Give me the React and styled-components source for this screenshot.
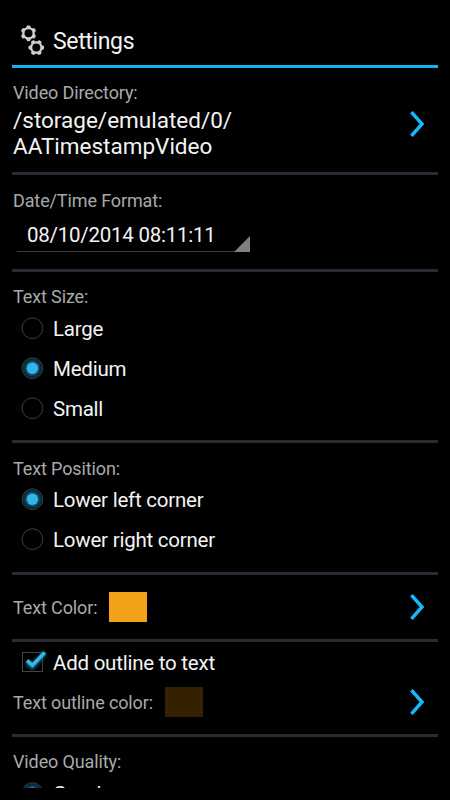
import React from "react";
import styled, { createGlobalStyle } from "styled-components";

const GlobalStyle = createGlobalStyle`
  * { box-sizing: border-box; }
  html, body { margin: 0; background: #000; }
  body { font-family: Roboto, "Liberation Sans", sans-serif; overflow: hidden; }
`;

const Screen = styled.main`
  width: 450px;
  height: 788px;
  padding: 0 12px;
  overflow: hidden;
  background: #000;
  color: #f3f3f3;
`;

const Header = styled.header`
  display: flex;
  align-items: center;
  height: 68px;
  padding: 14px 0 0 8px;
  border-bottom: 3px solid #14b4f0;
`;

const Title = styled.h1`
  margin: 0 0 0 7px;
  padding-top: 5px;
  font-size: 23px;
  font-weight: 400;
  line-height: 28px;
  letter-spacing: -0.35px;
`;

const Section = styled.section`
  height: ${(p) => p.$height + 3}px;
  border-bottom: 3px solid #2b2a35;
  padding-top: ${(p) => (p.$flush ? 0 : 14)}px;
`;

const Label = styled.div`
  height: 22px;
  padding-top: ${(p) => p.$drop || 0}px;
  padding-left: 1px;
  color: #a9a9a9;
  font-size: 18px;
  line-height: 22px;
  letter-spacing: -0.12px;
  white-space: nowrap;
`;

const LinkRow = styled.div`
  display: flex;
  align-items: center;
  justify-content: space-between;
  height: ${(p) => p.$height}px;
  padding-right: 13px;

  ${Label} {
    line-height: 20px;
    padding-top: 2px;
  }
`;

const DirectoryRow = styled.div`
  display: flex;
  justify-content: space-between;
  padding: 3px 13px 0 1px;
`;

const Path = styled.div`
  font-size: 22.5px;
  line-height: 26px;
`;

const Spinner = styled.div`
  display: flex;
  align-items: flex-end;
  justify-content: space-between;
  width: 233px;
  height: 41px;
  margin: 0 0 0 5px;
  padding-left: 10px;
  border-bottom: 1px solid #3c3c3c;
`;

const SpinnerText = styled.span`
  font-size: 20.5px;
  line-height: 32px;
  letter-spacing: -0.25px;
`;

const SpinnerCorner = styled.svg`
  display: block;
  margin-bottom: -1px;
`;

const Option = styled.div`
  display: flex;
  align-items: center;
  height: 40px;
  padding-left: 9px;
  gap: 8px;
`;

const OptionText = styled.span`
  padding-top: 1px;
  font-size: 20.5px;
  line-height: 26px;
  letter-spacing: -0.23px;
  white-space: nowrap;
`;

const ColorField = styled.div`
  display: flex;
  align-items: center;
  gap: 12px;
`;

const Swatch = styled.div`
  width: 38px;
  height: 30px;
  background: ${(p) => p.$color};
`;

const ChevronSvg = styled.svg`
  display: block;
  flex: none;
  margin-top: ${(p) => p.$top || 0}px;
`;

const Chevron = ({ top }) => (
  <ChevronSvg $top={top} width="16" height="28" viewBox="0 0 16 28">
    <path d="M2.4 2.2 L13 14 L2.4 25.8" fill="none" stroke="#14b9fa" strokeWidth="3.5" />
  </ChevronSvg>
);

const gearPath = (cx, cy, turn) => {
  const steps = 96;
  const pts = [];
  for (let i = 0; i < steps; i++) {
    const a = (i / steps) * Math.PI * 2;
    const tooth = Math.max(-1, Math.min(1, Math.cos(a * 6) * 1.7 + 0.2));
    const r = 7.05 + tooth * 0.8;
    const t = a - Math.PI / 2 + turn;
    pts.push(`${(cx + r * Math.cos(t)).toFixed(2)} ${(cy + r * Math.sin(t)).toFixed(2)}`);
  }
  return `M${pts.join("L")}Z M${cx - 4} ${cy}a4 4 0 1 0 8 0a4 4 0 1 0 -8 0Z`;
};

const Gears = () => (
  <svg width="26" height="32" viewBox="0 0 26 32">
    <g fill="#cecece" fillRule="evenodd">
      <path d={gearPath(8.5, 9.3, 0)} />
      <path d={gearPath(16.3, 23.6, Math.PI / 6)} />
    </g>
  </svg>
);

const Radio = ({ checked }) => (
  <svg width="24" height="24" viewBox="0 0 24 24">
    <defs>
      <radialGradient id="glow">
        <stop offset="0.5" stopColor="#11628a" />
        <stop offset="0.75" stopColor="#0b3549" />
        <stop offset="1" stopColor="#07151d" />
      </radialGradient>
    </defs>
    <circle cx="11.4" cy="12.2" r="10.4" fill={checked ? "url(#glow)" : "#000"} stroke="#3f3f3f" strokeWidth="1" />
    {checked && <circle cx="11.4" cy="12.2" r="5.7" fill="#33b5e5" />}
  </svg>
);

const Checkbox = () => (
  <svg width="24" height="24" viewBox="0 0 24 24" overflow="visible">
    <defs>
      <filter id="halo" x="-50%" y="-50%" width="200%" height="200%">
        <feGaussianBlur stdDeviation="1.6" />
      </filter>
    </defs>
    <rect x="1.5" y="1.5" width="20" height="19" fill="none" stroke="#454545" />
    <path d="M6 11 L11.3 15.7 L23.8 2" fill="none" stroke="#0b5b7c" strokeWidth="5.5" filter="url(#halo)" />
    <path d="M6 9.5 L11.4 14.2 L23.8 1.5" fill="none" stroke="#33b5e5" strokeWidth="3.7" />
  </svg>
);

const CheckOption = styled(Option)`
  height: 42px;

  ${OptionText} {
    padding-top: 0;
  }
`;

const RadioOption = ({ text, checked }) => (
  <Option>
    <Radio checked={checked} />
    <OptionText>{text}</OptionText>
  </Option>
);

export default function App() {
  return (
    <>
      <GlobalStyle />
      <Screen>
        <Header>
          <Gears />
          <Title>Settings</Title>
        </Header>

        <Section $height={104}>
          <Label>Video Directory:</Label>
          <DirectoryRow>
            <Path>/storage/emulated/0/<br />AATimestampVideo</Path>
            <Chevron top={3} />
          </DirectoryRow>
        </Section>

        <Section $height={94}>
          <Label $drop={1}>Date/Time Format:</Label>
          <Spinner>
            <SpinnerText>08/10/2014 08:11:11</SpinnerText>
            <SpinnerCorner width="16" height="16" viewBox="0 0 16 16">
              <path d="M16 0V16H0Z" fill="#7f7f7f" />
            </SpinnerCorner>
          </Spinner>
        </Section>

        <Section $height={168}>
          <Label>Text Size:</Label>
          <RadioOption text="Large" />
          <RadioOption text="Medium" checked />
          <RadioOption text="Small" />
        </Section>

        <Section $height={129}>
          <Label $drop={1}>Text Position:</Label>
          <RadioOption text="Lower left corner" checked />
          <RadioOption text="Lower right corner" />
        </Section>

        <Section $height={64} $flush>
          <LinkRow $height={64}>
            <ColorField>
              <Label>Text Color:</Label>
              <Swatch $color="#f2a118" />
            </ColorField>
            <Chevron />
          </LinkRow>
        </Section>

        <Section $height={92} $flush>
          <CheckOption>
            <Checkbox />
            <OptionText>Add outline to text</OptionText>
          </CheckOption>
          <LinkRow $height={36}>
            <ColorField>
              <Label>Text outline color:</Label>
              <Swatch $color="#332100" />
            </ColorField>
            <Chevron />
          </LinkRow>
        </Section>

        <Section $height={120}>
          <Label>Video Quality:</Label>
          <RadioOption text="Good" checked />
        </Section>
      </Screen>
    </>
  );
}
